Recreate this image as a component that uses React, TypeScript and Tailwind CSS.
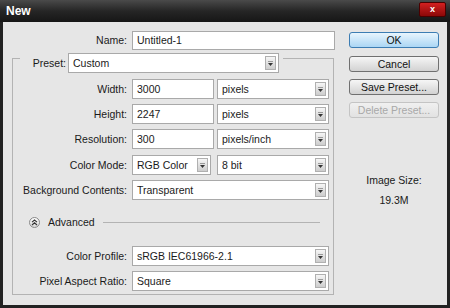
import React from "react";

function Arrow() {
  return (
    <div className="w-[11px] h-[14px] mr-[2px] border border-[#b0b0b0] bg-gradient-to-b from-[#f6f6f6] to-[#cdcdcd] flex flex-col items-center justify-center gap-[1px]">
      <div className="w-[5px] h-px bg-[#9a9a9a]" />
      <svg width="5" height="3" viewBox="0 0 5 3">
        <path d="M0 0h5L2.5 3z" fill="#333" />
      </svg>
    </div>
  );
}

function Select({ value, w }: { value: string; w: string }) {
  return (
    <div className={`${w} h-[20px] flex items-center border border-[#a9a9a9] bg-white`}>
      <div className="flex-1 pl-[4px] truncate">{value}</div>
      <Arrow />
    </div>
  );
}

function Input({ value, w }: { value: string; w: string }) {
  return (
    <div className={`${w} h-[20px] flex items-center border border-[#a9a9a9] bg-white pl-[4px]`}>
      {value}
    </div>
  );
}

function Label({ children }: { children: React.ReactNode }) {
  return <div className="w-[115px] pr-[1px] text-right shrink-0">{children}</div>;
}

function Btn({ children, kind }: { children: React.ReactNode; kind?: "ok" | "dis" }) {
  const cls =
    kind === "ok"
      ? "border-[#3c7db3] from-[#e8f5fd] to-[#abd6f4] text-[#111]"
      : kind === "dis"
      ? "border-[#c4c4c4] from-[#f0f0f0] to-[#e2e2e2] text-[#a8a8a8]"
      : "border-[#707070] from-[#f6f6f6] to-[#d2d2d2] text-[#111]";
  return (
    <div className={`h-[16px] w-[90px] rounded-[3px] border bg-gradient-to-b ${cls} flex items-center justify-center`}>
      {children}
    </div>
  );
}

export default function App() {
  return (
    <div className="w-[450px] h-[308px] bg-[#222] flex flex-col font-['Liberation_Sans',Arial,sans-serif] text-[10.5px] leading-[13px] text-[#1a1a1a]">
      <div className="h-[22px] shrink-0 flex items-center justify-between pl-[6px] pr-[4px] bg-gradient-to-b from-[#4a4a4a] via-[#262626] to-[#161616]">
        <span className="text-white font-bold text-[12px]">New</span>
        <div className="w-[27px] h-[15px] -mt-[3px] rounded-[2px] border border-[#4a0000] bg-gradient-to-b from-[#d42020] to-[#8c0808] flex items-center justify-center text-white text-[9px] font-bold leading-none">
          x
        </div>
      </div>
      <div className="flex-1 mx-[3px] mb-[3px] bg-[#e6e6e6] flex">
        <div className="w-[332px] shrink-0 pt-[9px]">
          <div className="flex items-center h-[19px]">
            <div className="w-[125px] text-right pr-[1px]">Name:</div>
            <div className="ml-[4px] w-[203px] h-[19px] flex items-center border border-[#a9a9a9] bg-white pl-[4px]">
              Untitled-1
            </div>
          </div>
          <div className="ml-[9px] mt-[8px] w-[322px] border border-[#b3b3b3] pb-[3px]">
            <div className="-mt-[6px] ml-[7px] w-[263px] flex items-center bg-[#e6e6e6]">
              <div className="w-[48px] text-right pr-[2px]">Preset:</div>
              <Select value="Custom" w="w-[211px]" />
            </div>
            <div className="mt-[6px] flex flex-col gap-[5px]">
              <div className="flex items-center">
                <Label>Width:</Label>
                <div className="ml-[4px]" />
                <Input value="3000" w="w-[82px]" />
                <div className="ml-[3px]" />
                <Select value="pixels" w="w-[112px]" />
              </div>
              <div className="flex items-center">
                <Label>Height:</Label>
                <div className="ml-[4px]" />
                <Input value="2247" w="w-[82px]" />
                <div className="ml-[3px]" />
                <Select value="pixels" w="w-[112px]" />
              </div>
              <div className="flex items-center">
                <Label>Resolution:</Label>
                <div className="ml-[4px]" />
                <Input value="300" w="w-[82px]" />
                <div className="ml-[3px]" />
                <Select value="pixels/inch" w="w-[112px]" />
              </div>
              <div className="flex items-center mt-[1px]">
                <Label>Color Mode:</Label>
                <div className="ml-[4px]" />
                <Select value="RGB Color" w="w-[79px]" />
                <div className="ml-[6px]" />
                <Select value="8 bit" w="w-[112px]" />
              </div>
              <div className="flex items-center">
                <Label>Background Contents:</Label>
                <div className="ml-[4px]" />
                <Select value="Transparent" w="w-[197px]" />
              </div>
            </div>
            <div className="mt-[15px] h-[14px] flex items-center">
              <div className="ml-[16px] w-[11px] h-[11px] rounded-full border border-[#8a8a8a] bg-gradient-to-b from-[#ffffff] to-[#d6d6d6] flex items-center justify-center">
                <svg width="7" height="7" viewBox="0 0 7 7">
                  <path d="M1 3.2L3.5 1 6 3.2M1 6L3.5 3.8 6 6" fill="none" stroke="#333" strokeWidth="1.1" />
                </svg>
              </div>
              <span className="ml-[8px]">Advanced</span>
              <div className="flex-1 ml-[8px] mr-[13px] h-px bg-[#b3b3b3]" />
            </div>
            <div className="mt-[17px] flex flex-col gap-[5px]">
              <div className="flex items-center">
                <Label>Color Profile:</Label>
                <div className="ml-[4px]" />
                <Select value="sRGB IEC61966-2.1" w="w-[197px]" />
              </div>
              <div className="flex items-center">
                <Label>Pixel Aspect Ratio:</Label>
                <div className="ml-[4px]" />
                <Select value="Square" w="w-[197px]" />
              </div>
            </div>
          </div>
        </div>
        <div className="flex-1 pl-[14px] pt-[10px] flex flex-col">
          <Btn kind="ok">OK</Btn>
          <div className="mt-[8px]">
            <Btn>Cancel</Btn>
          </div>
          <div className="mt-[7px]">
            <Btn>Save Preset...</Btn>
          </div>
          <div className="mt-[7px]">
            <Btn kind="dis">Delete Preset...</Btn>
          </div>
          <div className="w-[90px] mt-[56px] text-center">Image Size:</div>
          <div className="w-[90px] mt-[7px] text-center">19.3M</div>
        </div>
      </div>
    </div>
  );
}
